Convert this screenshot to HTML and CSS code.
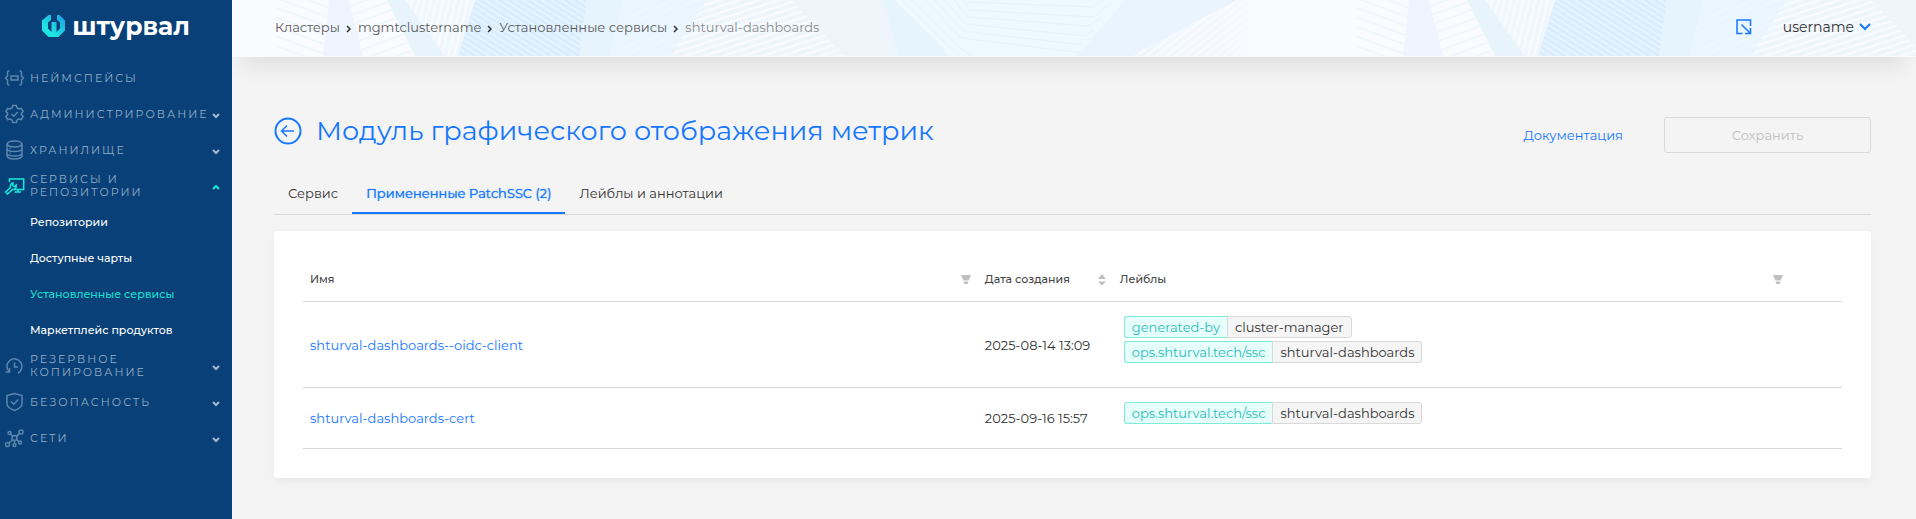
FILE: index.html
```
<!DOCTYPE html>
<html lang="ru">
<head>
<meta charset="utf-8">
<title>Штурвал</title>
<link rel="stylesheet" href="styles.css">
</head>

<body>
<div class="layout">
  <aside class="sidebar">
    <a class="logo" href="#">
      <svg width="24" height="22" viewBox="0 0 24 22">
        <defs>
          <linearGradient id="logoGradient" x1="0" y1="1" x2="1" y2="0">
            <stop offset="0.3" stop-color="#1fe5e0"/>
            <stop offset="1" stop-color="#1a9be8"/>
          </linearGradient>
        </defs>
        <path fill="url(#logoGradient)" d="M6.500 0H9v5L6 7.500v6L9.500 17V7h5v10l3.500-3.500v-6L15 5V0h2.500L23 5.500v10L16.500 22h-10L0 15.500v-10z"/>
      </svg>
      <span>штурвал</span>
    </a>
    <nav class="menu">
      <a class="menu-item" href="#">
        <svg class="menu-icon" viewBox="0 0 20 20"><path d="M5 3H4.500Q3 3 3 4.500v3.500L1 10l2 2v3.500Q3 17 4.500 17H5M15 3h.5Q17 3 17 4.500v3.500l2 2-2 2v3.500Q17 17 15.500 17H15M6.500 8h7v4h-7z"/></svg>
        <span class="menu-text">Неймспейсы</span>
      </a>
      <a class="menu-item" href="#">
        <svg class="menu-icon" viewBox="0 0 20 20"><path d="M8.200 1.500h3.600l.8 2.500 1.700 1 2.500-.6 1.800 3.100L16.900 9.400v1.200l1.700 1.900-1.800 3.100-2.500-.6-1.700 1-.8 2.500H8.200L7.400 16l-1.700-1-2.500.6-1.800-3.100 1.700-1.900V9.400L1.400 7.500l1.800-3.100 2.500.6 1.700-1zM7 10l2.300 2.200L13.200 8"/></svg>
        <span class="menu-text">Администрирование</span>
        <svg class="arrow" viewBox="0 0 8 6"><path d="M1 1l3 3 3-3"/></svg>
      </a>
      <a class="menu-item" href="#">
        <svg class="menu-icon" viewBox="0 0 20 20"><path d="M2.500 4q1-3 7.500-3t7.500 3q-1 3-7.500 3T2.500 4v12q1 3 7.500 3t7.500-3V4M2.500 9q1 2.500 7.500 2.500T17.500 9M2.500 13.500q1 2.500 7.500 2.500t7.500-2.500M5 8.500h1M5 13h1"/></svg>
        <span class="menu-text">Хранилище</span>
        <svg class="arrow" viewBox="0 0 8 6"><path d="M1 1l3 3 3-3"/></svg>
      </a>
      <a class="menu-item open" href="#">
        <svg class="menu-icon" viewBox="0 0 20 20"><path d="M5 6V3h14.200v10.500H10M13.500 13.500V16M10 16h6.500M1 16l5-4.500q-.8-3.500 2.500-4.500l-.3 2.500 1.500 1 2-1.500q.5 4-3.500 4.500L3 18z"/></svg>
        <span class="menu-text">Сервисы и репозитории</span>
        <svg class="arrow" viewBox="0 0 8 6"><path d="M1 4l3-3 3 3"/></svg>
      </a>
      <a class="submenu-item" href="#">Репозитории</a>
      <a class="submenu-item" href="#">Доступные чарты</a>
      <a class="submenu-item active" href="#">Установленные сервисы</a>
      <a class="submenu-item" href="#">Маркетплейс продуктов</a>
      <a class="menu-item" href="#">
        <svg class="menu-icon" viewBox="0 0 20 20"><path d="M1 16h4V12M4.500 15.500A7.500 7.500 0 1 1 13.500 17M10 6.500v4.500h3.500"/></svg>
        <span class="menu-text">Резервное копирование</span>
        <svg class="arrow" viewBox="0 0 8 6"><path d="M1 1l3 3 3-3"/></svg>
      </a>
      <a class="menu-item" href="#">
        <svg class="menu-icon" viewBox="0 0 20 20"><path d="M10 1.500l7.500 2v8.500q0 3.500-7.500 6.500Q2.500 15.500 2.500 12V3.500zM6.500 9.500L9.300 12.200 13.800 7.500"/></svg>
        <span class="menu-text">Безопасность</span>
        <svg class="arrow" viewBox="0 0 8 6"><path d="M1 1l3 3 3-3"/></svg>
      </a>
      <a class="menu-item" href="#">
        <svg class="menu-icon" viewBox="0 0 20 20"><circle cx="10" cy="10" r="2.500"/><circle cx="16.500" cy="4" r="2"/><circle cx="5" cy="5" r="1.500"/><circle cx="3" cy="16.500" r="2"/><circle cx="10" cy="17" r="1.500"/><circle cx="15.500" cy="14.500" r="1.500"/><path d="M6 6l2.200 2.200M15 5.400L12 8.400M8.200 11.800L4.400 15M10 12.500v3M12 11.500l2.300 2"/></svg>
        <span class="menu-text">Сети</span>
        <svg class="arrow" viewBox="0 0 8 6"><path d="M1 1l3 3 3-3"/></svg>
      </a>
    </nav>
  </aside>

  <div class="content">
    <header class="header">
      <svg class="header-bg" width="100%" height="100%" aria-hidden="true">
        <defs>
          <pattern id="blueLines" width="8" height="5" patternUnits="userSpaceOnUse" patternTransform="rotate(32)"><path d="M0 1h8" stroke="#e6f4fd" stroke-width="2"/></pattern>
          <pattern id="whiteLines" width="8" height="6" patternUnits="userSpaceOnUse" patternTransform="rotate(-18)"><path d="M0 1h8" stroke="#fafbff" stroke-width="2"/></pattern>
          <pattern id="paleLines" width="8" height="7" patternUnits="userSpaceOnUse" patternTransform="rotate(-18)"><path d="M0 1h8" stroke="#e7f4fd" stroke-width="1"/></pattern>
          <pattern id="steepLines" width="8" height="6" patternUnits="userSpaceOnUse" patternTransform="rotate(-38)"><path d="M0 1h8" stroke="#fafbff" stroke-width="2"/></pattern>
          <pattern id="fanLines" width="6" height="8" patternUnits="userSpaceOnUse" patternTransform="rotate(14)"><path d="M1 0v8" stroke="#fafbff" stroke-width="2"/></pattern>
          <pattern id="downLines" width="8" height="9" patternUnits="userSpaceOnUse" patternTransform="rotate(20)"><path d="M0 1h8" stroke="#f0f7fc" stroke-width="2"/></pattern>
          <pattern id="upLines" width="8" height="9" patternUnits="userSpaceOnUse" patternTransform="rotate(-20)"><path d="M0 1h8" stroke="#f0f7fc" stroke-width="2"/></pattern>
          <linearGradient id="fade"><stop offset="0" stop-color="#edf6fd"/><stop offset="1" stop-color="#fafbff"/></linearGradient>
          <pattern id="tile" width="1080" height="56" patternUnits="userSpaceOnUse">
            <path fill="url(#downLines)" d="M45 0h52l-6 56H45z"/>
            <path fill="#eff5ff" d="M97 0h20l14 56H91z"/>
            <path fill="url(#upLines)" d="M117 0h40l26 56h-52z"/>
            <path fill="#e7f4fc" d="M155 0h20l40 56h-32z"/>
            <path fill="#f0f8fd" d="M173 0h70l-17 56h-13z"/>
            <path fill="url(#fanLines)" d="M173 0h70l-17 56h-13z"/>
            <path fill="#d9edfe" d="M243 0h112l-8 56H226z"/>
            <path fill="url(#blueLines)" d="M243 0h112l-8 56H226z"/>
            <path fill="#e6f4fd" d="M355 0h36l-13 56h-31z"/>
            <path fill="#ebf6ff" d="M391 0h84l-36 56h-61z"/>
            <path fill="url(#paleLines)" d="M391 0h84l-36 56h-61z"/>
            <path fill="#eef6fc" d="M475 0h176l15 56H439z"/>
            <path fill="url(#whiteLines)" d="M475 0h85l52 56H439z"/>
            <path fill="#e5f4fd" d="M651 0h12l55 56h-52z"/>
            <path fill="#edf8ff" d="M663 0h230l-48 56H718z"/>
            <path fill="none" stroke="#e4f4fc" stroke-width="1" d="M670 0l57 56M681 0l46 47 12 9M693 0l36 38 122 15M703 0l28 31 120 14M713 0l20 24 120 12 8-6M722 0l14 17 121 9 13-9M731 0l7 10 123 7 18-14M737 2l124 5 10-7"/>
            <path fill="#e9f4fe" d="M893 0h112L900 56h-55z"/>
            <path fill="url(#fade)" d="M1005 0h50v56H900z"/>
            <path fill="url(#steepLines)" d="M1005 0h50v56H900z"/>
          </pattern>
        </defs>
        <rect width="100%" height="56" fill="url(#tile)"/>
      </svg>
      <nav class="breadcrumbs">
        <a href="#">Кластеры</a>
        <svg class="separator" viewBox="0 0 6 8"><path d="M1 1l3 3-3 3"/></svg>
        <a href="#">mgmtclustername</a>
        <svg class="separator" viewBox="0 0 6 8"><path d="M1 1l3 3-3 3"/></svg>
        <a href="#">Установленные сервисы</a>
        <svg class="separator" viewBox="0 0 6 8"><path d="M1 1l3 3-3 3"/></svg>
        <span class="current">shturval-dashboards</span>
      </nav>
      <div class="header-right">
        <button class="icon-button" aria-label="Открыть">
          <svg width="16" height="16" viewBox="0 0 16 16"><path d="M6.500 14.500H1V1h13.500v6M5.500 5.500l9 9M9 14.500h5.500V9"/></svg>
        </button>
        <button class="user">username
          <svg width="12" height="8" viewBox="0 0 12 8"><path d="M1 1l5 5 5-5"/></svg>
        </button>
      </div>
    </header>

    <main class="page">
      <div class="page-header">
        <button class="back" aria-label="Назад">
          <svg width="28" height="28" viewBox="0 0 28 28"><circle cx="14" cy="14" r="12.500" stroke-width="2"/><path d="M20 14H8M13 8.500L7.500 14l5.500 5.500" stroke-width="1.500"/></svg>
        </button>
        <h1>Модуль графического отображения метрик</h1>
        <a class="docs" href="#">Документация</a>
        <button class="save" disabled>Сохранить</button>
      </div>

      <div class="tabs" role="tablist">
        <button class="tab" role="tab">Сервис</button>
        <button class="tab active" role="tab" aria-selected="true">Примененные PatchSSC (2)</button>
        <button class="tab" role="tab">Лейблы и аннотации</button>
      </div>

      <div class="card">
        <table>
          <colgroup>
            <col class="col-name">
            <col class="col-date">
            <col class="col-labels">
            <col class="col-actions">
          </colgroup>
          <thead>
            <tr>
              <th>
                <div class="th-inner">Имя
                  <button class="filter" aria-label="Фильтр"><svg width="10" height="10" viewBox="0 0 10 10"><path d="M0 0h10L7.500 5.500h-5zM3 6.500h4V9H3z"/></svg></button>
                </div>
              </th>
              <th>
                <div class="th-inner">Дата создания
                  <button class="filter" aria-label="Сортировка"><svg width="8" height="12" viewBox="0 0 8 12"><path d="M0 5l4-5 4 5zM0 7.500h8l-4 4z"/></svg></button>
                </div>
              </th>
              <th>
                <div class="th-inner">Лейблы
                  <button class="filter" aria-label="Фильтр"><svg width="10" height="10" viewBox="0 0 10 10"><path d="M0 0h10L7.500 5.500h-5zM3 6.500h4V9H3z"/></svg></button>
                </div>
              </th>
              <th></th>
            </tr>
          </thead>
          <tbody>
            <tr>
              <td><a href="#">shturval-dashboards--oidc-client</a></td>
              <td>2025-08-14 13:09</td>
              <td>
                <div class="labels">
                  <div class="label"><span class="key">generated-by</span><span class="value">cluster-manager</span></div>
                  <div class="label"><span class="key">ops.shturval.tech/ssc</span><span class="value">shturval-dashboards</span></div>
                </div>
              </td>
              <td></td>
            </tr>
            <tr>
              <td><a href="#">shturval-dashboards-cert</a></td>
              <td>2025-09-16 15:57</td>
              <td>
                <div class="labels">
                  <div class="label"><span class="key">ops.shturval.tech/ssc</span><span class="value">shturval-dashboards</span></div>
                </div>
              </td>
              <td></td>
            </tr>
          </tbody>
        </table>
      </div>
    </main>
  </div>
</div>
</body>
</html>
```
FILE: styles.css
```
* {
  box-sizing: border-box;
}

body {
  margin: 0;
  background: #f4f4f4;
  color: #333;
  font: 13px/20px Montserrat, Inter, sans-serif;
}

a {
  color: #1677ff;
  text-decoration: none;
}

button {
  padding: 0;
  border: 0;
  background: none;
  color: inherit;
  font: inherit;
  cursor: pointer;
}

svg {
  display: block;
  flex: none;
}

.layout {
  display: flex;
  min-height: 100vh;
}

/* sidebar */
.sidebar {
  position: relative;
  z-index: 2;
  flex: none;
  width: 232px;
  background: #084077;
}

.logo {
  display: flex;
  align-items: center;
  justify-content: center;
  gap: 6px;
  height: 60px;
  padding-bottom: 8px;
  color: #fff;
  font-size: 25px;
  font-weight: 700;
}

.menu-item,
.submenu-item {
  display: flex;
  align-items: center;
  height: 36px;
  font-size: 11px;
}

.menu-item {
  gap: 5px;
  padding: 0 12px 0 4px;
  color: #93aec8;
  line-height: 13px;
  letter-spacing: 2px;
  text-transform: uppercase;
}

.menu-icon {
  width: 21px;
  height: 20px;
  fill: none;
  stroke: #5d86ad;
  stroke-width: 1.5;
}

.menu-text {
  flex: 1;
  min-width: 0;
}

.arrow {
  width: 8px;
  height: 6px;
  margin: 4px 0 0 6px;
  fill: none;
  stroke: #a3bad0;
  stroke-width: 2;
}

.open .menu-icon,
.open .arrow {
  stroke: #17ead9;
}

.submenu-item {
  padding-left: 30px;
  color: #fff;
  font-weight: 500;
}

.submenu-item.active {
  color: #17dfd0;
}

/* header */
.content {
  flex: 1;
  min-width: 0;
}

.header {
  position: relative;
  display: flex;
  align-items: center;
  justify-content: space-between;
  height: 57px;
  padding: 0 45px 3px 43px;
  background: #fafbff;
  box-shadow: 0 20px 20px -10px rgba(0, 0, 0, 0.08);
}

.header-bg {
  position: absolute;
  top: 0;
  left: 0;
}

.breadcrumbs,
.header-right {
  position: relative;
  display: flex;
  align-items: center;
}

.breadcrumbs {
  gap: 6px;
}

.breadcrumbs a {
  color: #5c5c5c;
}

.breadcrumbs .current {
  color: #8c8c8c;
}

.separator {
  width: 6px;
  height: 8px;
  margin-top: 3px;
  fill: none;
  stroke: #333;
  stroke-width: 1.5;
}

.header-right {
  gap: 31px;
}

.header-right svg {
  fill: none;
  stroke: #1677ff;
  stroke-width: 1.5;
}

.user {
  display: flex;
  align-items: center;
  gap: 5px;
  font-size: 14px;
}

.header-right .user svg {
  stroke-width: 2;
}

/* page */
.page {
  padding: 60px 45px 42px 42px;
}

.page-header {
  display: flex;
  align-items: center;
  height: 36px;
}

.back {
  margin: 0 14px 8px 0;
}

.back svg {
  fill: none;
  stroke: #1677ff;
}

h1 {
  flex: 1;
  margin: 0 0 8px;
  color: #1677ff;
  font-size: 27px;
  font-weight: 400;
  line-height: 32px;
}

.docs {
  margin-right: 41px;
}

.save {
  width: 207px;
  height: 36px;
  border: 1px solid #d9d9d9;
  border-radius: 3px;
  color: #bfbfbf;
}

.tabs {
  display: flex;
  margin: 20px 0 16px;
  border-bottom: 1px solid #d9d9d9;
}

.tab {
  padding: 10px 14px 9px;
  border-bottom: 2px solid transparent;
}

.tab.active {
  border-color: #1677ff;
  color: #1677ff;
  text-shadow: 0 0 1px currentcolor;
}

/* table */
.card {
  padding: 29px;
  border-radius: 3px;
  background: #fff;
  box-shadow: 0 4px 10px rgba(0, 0, 0, 0.05);
}

table {
  width: 100%;
  border-collapse: collapse;
  table-layout: fixed;
}

.col-date {
  width: 135px;
}

.col-labels {
  width: 44%;
}

.col-actions {
  width: 52px;
}

th,
td {
  padding: 14px 7px;
  border-bottom: 1px solid #d9d9d9;
  text-align: left;
}

th {
  padding: 9px 7px 12px;
  color: #444;
  font-size: 11px;
  font-weight: 500;
}

.th-inner {
  display: flex;
  align-items: center;
  justify-content: space-between;
}

.filter svg {
  margin-top: 2px;
  fill: #bfbfbf;
}

.labels {
  display: flex;
  flex-direction: column;
  gap: 3px;
  margin: 0 0 10px 4px;
}

.label {
  display: flex;
}

.key,
.value {
  padding: 0 7px;
  border: 1px solid #d9d9d9;
  background: #f5f5f5;
}

.key {
  border-color: #7eeadb;
  border-right: 0;
  border-radius: 3px 0 0 3px;
  background: #e6fffb;
  color: #2bbdbd;
}

.value {
  border-radius: 0 3px 3px 0;
}
```
